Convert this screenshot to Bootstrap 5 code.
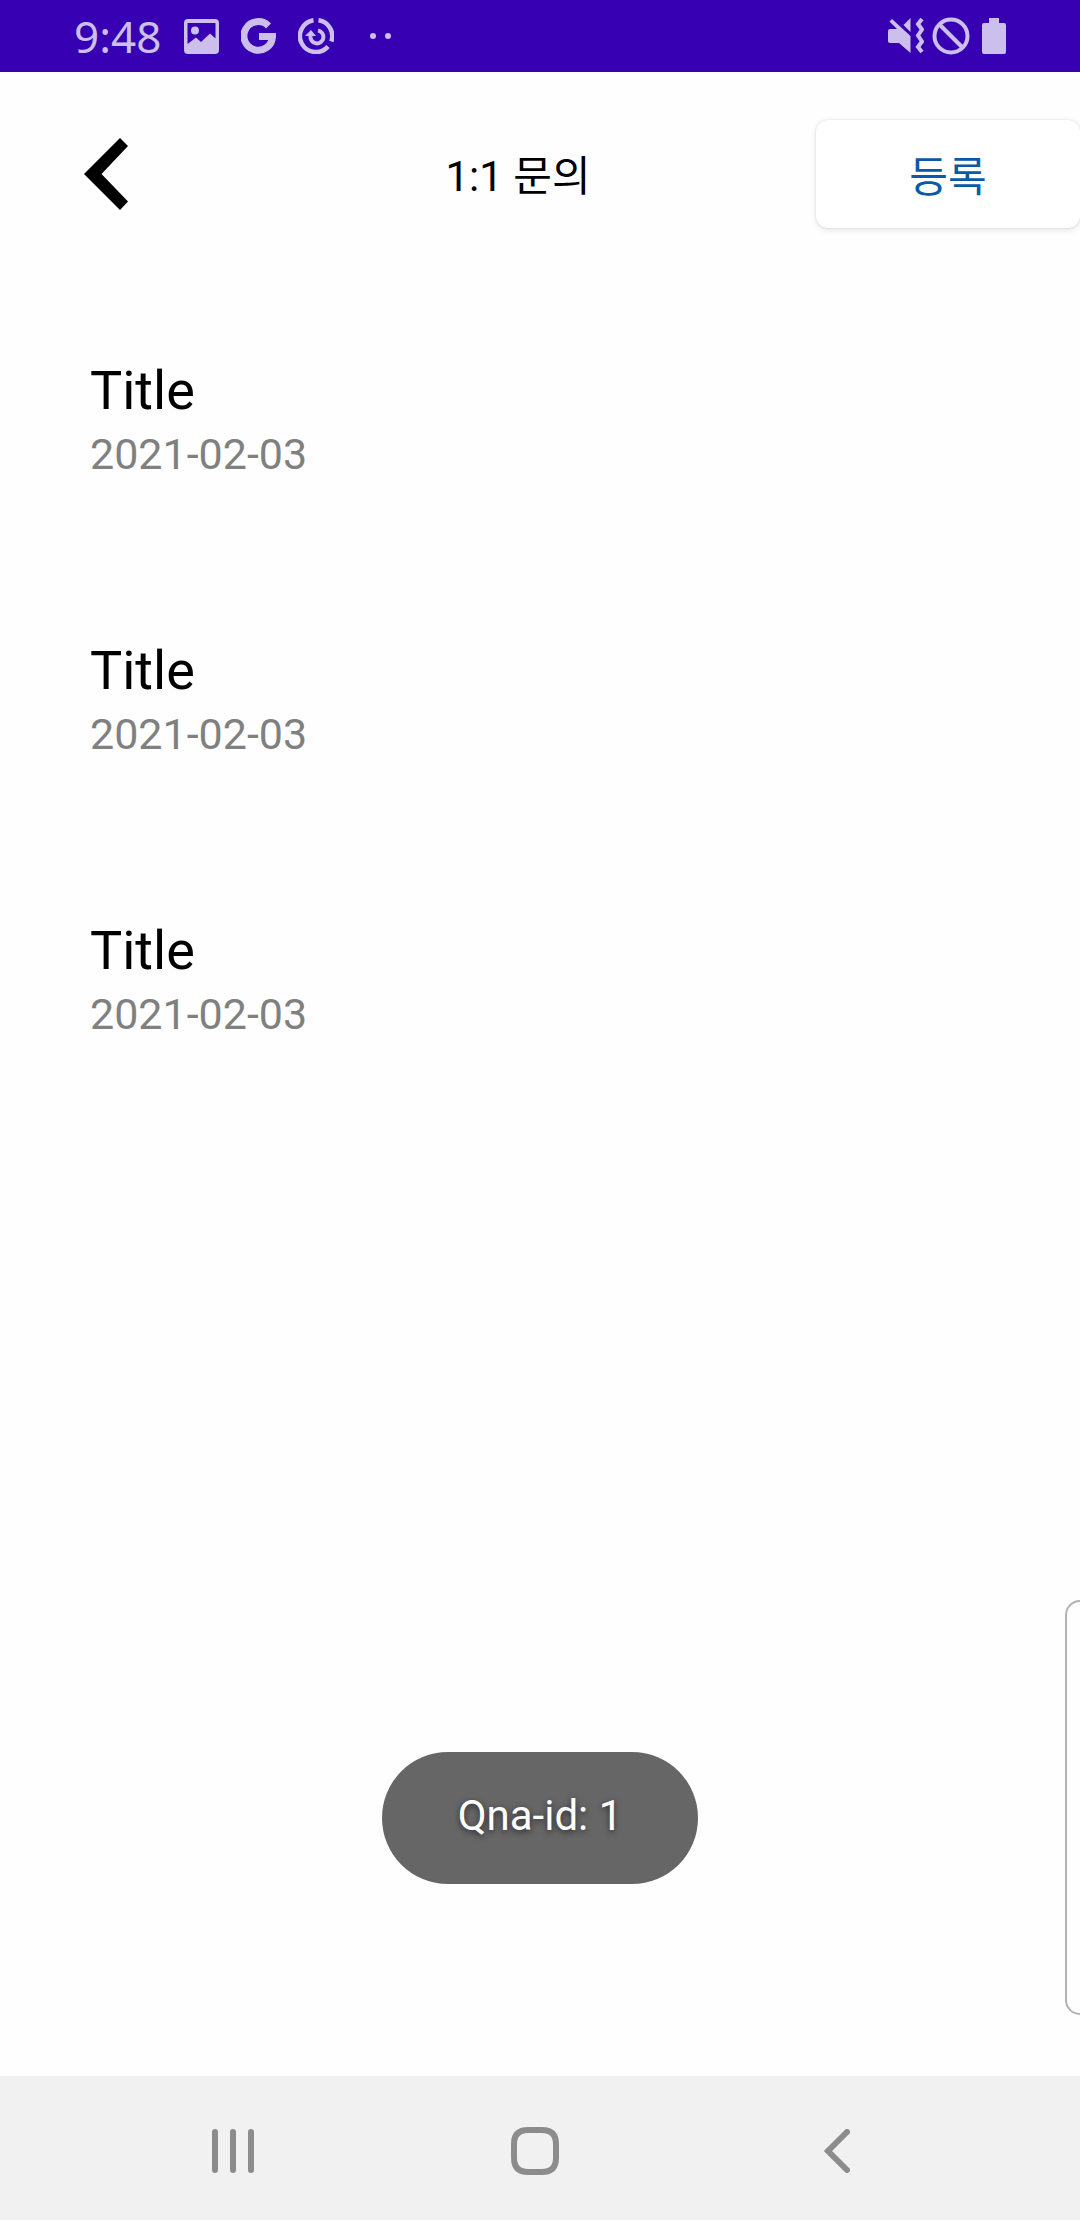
<!DOCTYPE html>
<html lang="ko">
<head>
<meta charset="utf-8">
<meta name="viewport" content="width=device-width, initial-scale=1">
<title>1:1 문의</title>
<link href="https://cdn.jsdelivr.net/npm/bootstrap@5.3.0/dist/css/bootstrap.min.css" rel="stylesheet">
<style>
  body { font-family: Roboto, "Noto Sans CJK KR", sans-serif; font-size: 42px; line-height: 50px; color: #000; background: #fefefe; }
  svg { display: block; flex: none; }
  .status-bar { height: 72px; padding: 0 74px; background: #3700b3; color: #cdbfec; }
  .clock { font-family: "Noto Sans", sans-serif; font-size: 44px; width: 88px; }
  .status-left { gap: 22px; }
  .more-dots { margin-left: 14px; }
  .app-header { padding: 48px 0 50px; }
  .back-btn { width: 220px; padding: 0 0 0 84px; border: 0; border-radius: 0; }
  .page-title { padding-top: 6px; }
  .submit-btn { width: 264px; height: 108px; padding: 6px 0 0; border: 0; border-radius: 12px; background: #fff; color: #0a5aa8; font-size: 42px; font-weight: 400;
    box-shadow: 0 2px 6px rgba(0,0,0,.1), 0 0 2px rgba(0,0,0,.14); }
  .submit-btn:hover { background: #fff; color: #0a5aa8; }
  .qna-item { padding: 77px 90px; border: 0; background: transparent; color: #000; }
  .qna-title { font-size: 54px; line-height: 72px; font-weight: 400; margin: 0; }
  .qna-date { font-size: 43px; line-height: 54px; color: #808080; }
  .toast-layer { bottom: 336px; }
  .toast-pill { padding: 39px 76px 43px; background: #666; color: #fff; text-shadow: 0 2px 6px rgba(0,0,0,.6); }
  .edge-handle { bottom: 205px; width: 15px; height: 415px; border: 2px solid #b2b2b2; border-right: 0; border-radius: 20px 0 0 20px; }
  .system-nav { height: 144px; padding: 6px 92px 0 82px; background: #f1f1f1; }
  .system-nav .btn { border: 0; color: #8c8c8c; }
</style>
</head>
<body class="d-flex flex-column min-vh-100 position-relative">
  <div class="status-bar d-flex align-items-center justify-content-between">
    <div class="status-left d-flex align-items-center">
      <span class="clock">9:48</span>
      <svg width="35" height="35" viewBox="0 0 35 35" aria-hidden="true"><path fill="currentColor" fill-rule="evenodd" d="M4 0H31a4 4 0 0 1 4 4V31a4 4 0 0 1-4 4H4a4 4 0 0 1-4-4V4a4 4 0 0 1 4-4zM3.500 4V25L12 18.500L17 23L26 14.500L31.500 19.500V4zM11 7.500a4 4 0 1 1 0 8a4 4 0 0 1 0-8z"/></svg>
      <svg width="35" height="36" viewBox="0 0 35 36" aria-hidden="true"><path fill="none" stroke="currentColor" stroke-width="7" d="M27.500 8A14.300 14.300 0 1 0 31.500 18.500H18"/></svg>
      <svg width="36" height="36" viewBox="0 0 36 36" fill="none" stroke="currentColor" stroke-width="4.500" aria-hidden="true"><path d="M15.500 2.200A16 16 0 1 0 30 28.500M20.500 2.200A16 16 0 0 1 33.300 23.500"/><path stroke-width="4" d="M20 12.500A6.500 6.500 0 1 1 12.500 18"/><path fill="currentColor" stroke="none" d="M7 18L13 12L18 18z"/></svg>
      <svg class="more-dots" width="21" height="6" viewBox="0 0 21 6" fill="currentColor" aria-hidden="true"><circle cx="3" cy="3" r="3"/><circle cx="18" cy="3" r="3"/></svg>
    </div>
    <div class="d-flex align-items-center gap-2">
      <svg width="36" height="36" viewBox="0 0 36 36" aria-hidden="true"><path fill="currentColor" d="M2 11H9L1.500 3.500L4 1L22.500 18V35L11 25H2Q0 25 0 23V13Q0 11 2 11zM22.500 0V14L15.500 7z"/><path fill="none" stroke="currentColor" stroke-width="4" d="M34 1L30 6L34 11.500L30 17.500L34 23.500L30 29L34 34"/></svg>
      <svg width="38" height="38" viewBox="0 0 38 38" fill="none" stroke="currentColor" stroke-width="4" aria-hidden="true"><circle cx="19" cy="19" r="16.500"/><path d="M7.500 7.500L30.500 30.500"/></svg>
      <svg class="ms-1" width="24" height="36" viewBox="0 0 24 36" fill="currentColor" aria-hidden="true"><path d="M7 0H17V5H22a2 2 0 0 1 2 2V34a2 2 0 0 1-2 2H2a2 2 0 0 1-2-2V7a2 2 0 0 1 2-2H7z"/></svg>
    </div>
  </div>

  <header class="app-header d-flex align-items-center">
    <button type="button" class="btn back-btn" aria-label="뒤로">
      <svg width="44" height="72" viewBox="0 0 44 72" aria-hidden="true"><path d="M36 0L44 8L17.500 36L44 63.500L36 72L0 36z"/></svg>
    </button>
    <div class="page-title flex-fill text-center">1:1 문의</div>
    <button type="button" class="btn submit-btn">등록</button>
  </header>

  <main class="flex-fill">
    <div class="list-group list-group-flush">
      <a href="#qna-1" class="list-group-item qna-item"><h2 class="qna-title">Title</h2><div class="qna-date">2021-02-03</div></a>
      <a href="#qna-2" class="list-group-item qna-item"><h2 class="qna-title">Title</h2><div class="qna-date">2021-02-03</div></a>
      <a href="#qna-3" class="list-group-item qna-item"><h2 class="qna-title">Title</h2><div class="qna-date">2021-02-03</div></a>
    </div>
  </main>

  <div class="toast-layer position-absolute start-0 end-0 d-flex justify-content-center" role="status">
    <div class="toast-pill rounded-pill">Qna-id: 1</div>
  </div>
  <div class="edge-handle position-absolute end-0"></div>

  <nav class="system-nav d-flex align-items-center">
    <button type="button" class="btn flex-fill w-100 d-flex justify-content-center" aria-label="최근 앱">
      <svg width="42" height="44" viewBox="0 0 42 44" fill="none" stroke="currentColor" stroke-width="6" stroke-linecap="round"><path d="M3 3V41M21 3V41M39 3V41"/></svg>
    </button>
    <button type="button" class="btn flex-fill w-100 d-flex justify-content-center" aria-label="홈">
      <svg width="48" height="48" viewBox="0 0 48 48" fill="none" stroke="currentColor" stroke-width="6"><path d="M17 3H31Q45 3 45 17V31Q45 45 31 45H17Q3 45 3 31V17Q3 3 17 3z"/></svg>
    </button>
    <button type="button" class="btn flex-fill w-100 d-flex justify-content-center" aria-label="이전">
      <svg width="26" height="44" viewBox="0 0 26 44" fill="none" stroke="currentColor" stroke-width="6" stroke-linecap="round"><path d="M23 3L4 22L23 41"/></svg>
    </button>
  </nav>
<script src="https://cdn.jsdelivr.net/npm/bootstrap@5.3.0/dist/js/bootstrap.bundle.min.js"></script>
</body>
</html>
